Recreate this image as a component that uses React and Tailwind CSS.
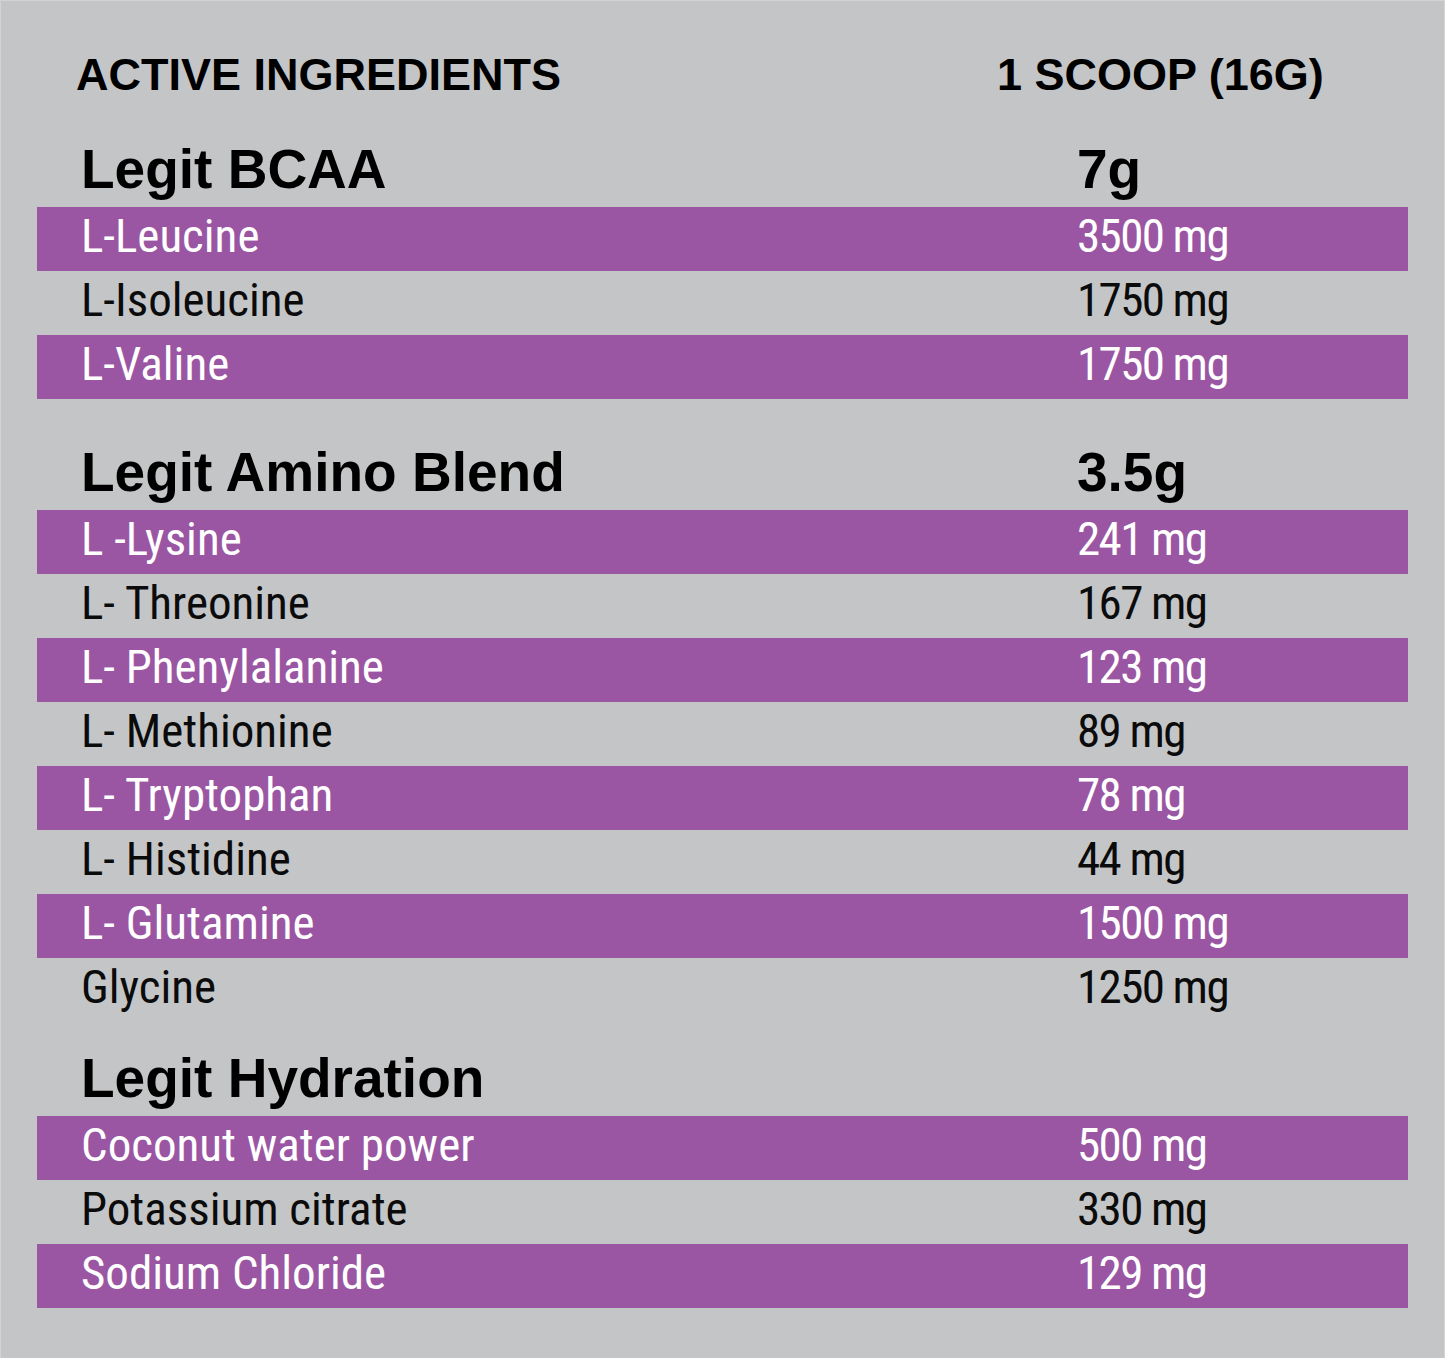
const sections = [
  {
    title: "Legit BCAA",
    amount: "7g",
    gap: "mt-[45px]",
    rows: [
      ["L-Leucine", "3500 mg"],
      ["L-Isoleucine", "1750 mg"],
      ["L-Valine", "1750 mg"],
    ],
  },
  {
    title: "Legit Amino Blend",
    amount: "3.5g",
    gap: "mt-[46px]",
    rows: [
      ["L -Lysine", "241 mg"],
      ["L- Threonine", "167 mg"],
      ["L- Phenylalanine", "123 mg"],
      ["L- Methionine", "89 mg"],
      ["L- Tryptophan", "78 mg"],
      ["L- Histidine", "44 mg"],
      ["L- Glutamine", "1500 mg"],
      ["Glycine", "1250 mg"],
    ],
  },
  {
    title: "Legit Hydration",
    amount: "",
    gap: "mt-[29px]",
    rows: [
      ["Coconut water power", "500 mg"],
      ["Potassium citrate", "330 mg"],
      ["Sodium Chloride", "129 mg"],
    ],
  },
];

const heading = "font-['Liberation_Sans',Arial,sans-serif] font-bold text-black";
const body = "font-['Roboto_Condensed',Roboto,sans-serif] text-[47px] leading-[58px]";

export default function App() {
  return (
    <div className="min-h-screen w-full bg-[#c4c5c7] border-t border-l border-r border-[#d2d3d5] px-[36px] pt-[51px] pb-[50px]">
      {/* table header */}
      <div className={`grid grid-cols-[921px_1fr] pl-[39px] text-[45px] leading-none ${heading}`}>
        <div>ACTIVE INGREDIENTS</div>
        <div>1 SCOOP (16G)</div>
      </div>

      {sections.map((s) => (
        <div key={s.title} className={s.gap}>
          <div className={`grid grid-cols-[1040px_1fr] text-[55px] leading-none mb-[10px] ${heading}`}>
            <div className="pl-[44px]">{s.title}</div>
            <div>{s.amount}</div>
          </div>
          <div>
            {s.rows.map(([name, val], i) => (
              <div
                key={name}
                className={`grid grid-cols-[1040px_1fr] h-[64px] pb-[6px] ${body} ${
                  i % 2 === 0 ? "bg-[#9a56a2] text-white" : "text-[#0b0b0b]"
                }`}
              >
                <div className="pl-[44px]">{name}</div>
                <div className="tracking-[-1.6px]">{val}</div>
              </div>
            ))}
          </div>
        </div>
      ))}
    </div>
  );
}
